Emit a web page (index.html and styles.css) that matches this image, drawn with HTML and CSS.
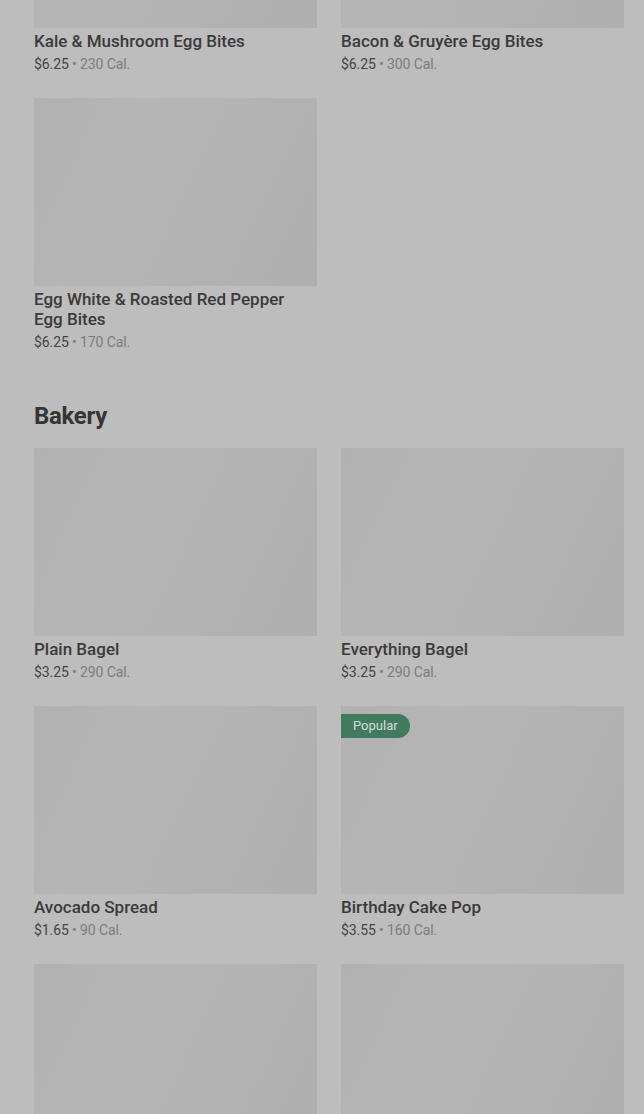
FILE: index.html
```html
<!DOCTYPE html>
<html>
<head>
<meta charset="utf-8">
<link rel="stylesheet" href="styles.css">
</head>
<body>
<main class="menu">
  <section class="section section-first">
    <div class="grid">
      <div class="card">
        <div class="thumb"></div>
        <div class="name">Kale &amp; Mushroom Egg Bites</div>
        <div class="meta"><span class="price">$6.25</span> • 230 Cal.</div>
      </div>
      <div class="card">
        <div class="thumb"></div>
        <div class="name">Bacon &amp; Gruyère Egg Bites</div>
        <div class="meta"><span class="price">$6.25</span> • 300 Cal.</div>
      </div>
      <div class="card">
        <div class="thumb"></div>
        <div class="name">Egg White &amp; Roasted Red Pepper Egg Bites</div>
        <div class="meta"><span class="price">$6.25</span> • 170 Cal.</div>
      </div>
    </div>
  </section>
  <section class="section">
    <h2 class="heading">Bakery</h2>
    <div class="grid">
      <div class="card">
        <div class="thumb"></div>
        <div class="name">Plain Bagel</div>
        <div class="meta"><span class="price">$3.25</span> • 290 Cal.</div>
      </div>
      <div class="card">
        <div class="thumb"></div>
        <div class="name">Everything Bagel</div>
        <div class="meta"><span class="price">$3.25</span> • 290 Cal.</div>
      </div>
      <div class="card">
        <div class="thumb"></div>
        <div class="name">Avocado Spread</div>
        <div class="meta"><span class="price">$1.65</span> • 90 Cal.</div>
      </div>
      <div class="card">
        <div class="thumb"><span class="badge">Popular</span></div>
        <div class="name">Birthday Cake Pop</div>
        <div class="meta"><span class="price">$3.55</span> • 160 Cal.</div>
      </div>
      <div class="card">
        <div class="thumb"></div>
        <div class="name">&nbsp;</div>
      </div>
      <div class="card">
        <div class="thumb"></div>
        <div class="name">&nbsp;</div>
      </div>
    </div>
  </section>
</main>
</body>
</html>
```
FILE: styles.css
```css
html, body {
  margin: 0;
  padding: 0;
  background: #bdbdbd;
  overflow: hidden;
}
body {
  font-family: Roboto, "Liberation Sans", sans-serif;
  color: #383838;
}
.menu {
  padding: 0 20px 0 34px;
}
.section-first {
  margin-top: -160px;
}
.section + .section {
  margin-top: 48px;
}
.heading {
  margin: 0 0 16px;
  font-size: 24px;
  line-height: 32px;
  font-weight: 700;
  letter-spacing: -0.3px;
  color: #353535;
}
.grid {
  display: grid;
  grid-template-columns: 283px 283px;
  column-gap: 24px;
  row-gap: 24px;
  align-items: start;
}
.thumb {
  position: relative;
  height: 188px;
  background: linear-gradient(115deg, #b1b1b1 0%, #b5b5b5 30%, #b3b3b3 60%, #afafaf 100%);
}
.badge {
  position: absolute;
  left: 0;
  top: 8px;
  height: 24px;
  line-height: 24px;
  padding: 0 12px;
  background: #3f7b5c;
  color: #dcdcdc;
  font-size: 13px;
  border-radius: 0 12px 12px 0;
}
.name {
  margin-top: 3px;
  padding-right: 8px;
  font-size: 17px;
  line-height: 20px;
  font-weight: 500;
  color: #3a3a3a;
}
.meta {
  margin-top: 3px;
  font-size: 14px;
  line-height: 20px;
  letter-spacing: -0.1px;
  color: #7c7c7c;
}
.price {
  color: #444;
}
```
